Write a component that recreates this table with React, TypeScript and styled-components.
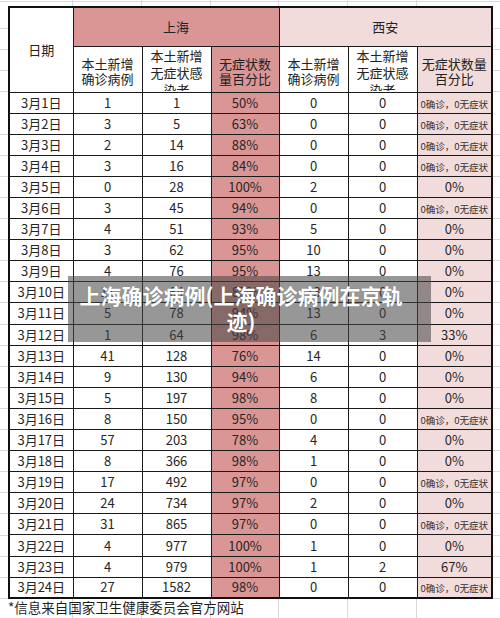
import React from 'react';
import styled, { createGlobalStyle } from 'styled-components';

const GlobalStyle = createGlobalStyle`
    html, body {
        margin: 0;
        padding: 0;
        background: #ffffff;
    }
    body {
        font-family: "Noto Sans CJK SC", "Liberation Sans", sans-serif;
        color: #1c1c1c;
    }
`;

const PINK = '#da9694';
const LIGHT_PINK = '#f2dcdb';
const GRID = '#dadada';

const Sheet = styled.div`
    position: relative;
    width: 500px;
    height: 618px;
    overflow: hidden;
    box-sizing: border-box;
    padding: 6px 0 0 8px;
    background:
        linear-gradient(${GRID}, ${GRID}) 72px 0 / 1px 100% no-repeat,
        linear-gradient(${GRID}, ${GRID}) 141px 0 / 1px 100% no-repeat,
        linear-gradient(${GRID}, ${GRID}) 210px 0 / 1px 100% no-repeat,
        linear-gradient(${GRID}, ${GRID}) 278px 0 / 1px 100% no-repeat,
        linear-gradient(${GRID}, ${GRID}) 347px 0 / 1px 100% no-repeat,
        linear-gradient(${GRID}, ${GRID}) 416px 0 / 1px 100% no-repeat,
        repeating-linear-gradient(
            to bottom,
            transparent 0 20.1px,
            ${GRID} 20.1px 21.1px
        ) 0 8px / 100% 100%,
        #ffffff;
`;

const Table = styled.table`
    border-collapse: collapse;
    table-layout: fixed;
    width: 483px;
    border: 2px solid #111;
    background: #ffffff;
`;

const HeadRow = styled.tr<{ $h: number }>`
    height: ${(p) => p.$h}px;
`;

const HeadCell = styled.th<{ $bg?: string }>`
    padding: 0 2px;
    border: 1px solid #1a1a1a;
    background: ${(p) => p.$bg || '#ffffff'};
    font-weight: 400;
    font-size: 13px;
    line-height: 15px;
    text-align: center;
    vertical-align: middle;
    color: #222;
    overflow: hidden;
`;

const Wrap = styled.div<{ $clip?: boolean }>`
    height: ${(p) => (p.$clip ? '44px' : 'auto')};
    overflow: hidden;
    line-height: ${(p) => (p.$clip ? '17px' : '15px')};
    padding-top: ${(p) => (p.$clip ? '0' : '3px')};
    margin-top: ${(p) => (p.$clip ? '-1px' : '0')};
    box-sizing: border-box;
    word-break: break-all;
`;

const DataRow = styled.tr`
    height: 21.1px;
`;

const Cell = styled.td<{ $bg?: string }>`
    padding: 0;
    border: 1px solid #1a1a1a;
    background: ${(p) => p.$bg || '#ffffff'};
    font-size: 13px;
    line-height: 14px;
    text-align: center;
    vertical-align: middle;
    color: #262626;
    white-space: nowrap;
    overflow: hidden;
`;

const Small = styled.span`
    font-size: 9.6px;
    line-height: 12px;
    letter-spacing: -0.1px;
    color: #333;
`;

const Footer = styled.div`
    margin-top: 0;
    font-size: 13.5px;
    line-height: 17px;
    color: #1e1e1e;
    white-space: nowrap;
`;

const Caption = styled.div`
    position: absolute;
    left: 68px;
    top: 276px;
    width: 363px;
    height: 66px;
    box-sizing: border-box;
    padding: 6px 25px 0 8px;
    background: rgba(70, 70, 70, 0.56);
    color: #ffffff;
    font-family: "Noto Sans CJK SC", sans-serif;
    font-weight: 700;
    font-size: 21px;
    line-height: 26px;
    text-align: center;
    text-shadow: 0 0 1px rgba(0, 0, 0, 0.3);
`;

type Row = [string, string, string, string, string, string, string];

const NONE = 'none';

const rows: Row[] = [
    ['3月1日', '1', '1', '50%', '0', '0', NONE],
    ['3月2日', '3', '5', '63%', '0', '0', NONE],
    ['3月3日', '2', '14', '88%', '0', '0', NONE],
    ['3月4日', '3', '16', '84%', '0', '0', NONE],
    ['3月5日', '0', '28', '100%', '2', '0', '0%'],
    ['3月6日', '3', '45', '94%', '0', '0', NONE],
    ['3月7日', '4', '51', '93%', '5', '0', '0%'],
    ['3月8日', '3', '62', '95%', '10', '0', '0%'],
    ['3月9日', '4', '76', '95%', '13', '0', '0%'],
    ['3月10日', '11', '64', '85%', '13', '0', '0%'],
    ['3月11日', '5', '78', '94%', '13', '0', '0%'],
    ['3月12日', '1', '64', '98%', '6', '3', '33%'],
    ['3月13日', '41', '128', '76%', '14', '0', '0%'],
    ['3月14日', '9', '130', '94%', '6', '0', '0%'],
    ['3月15日', '5', '197', '98%', '8', '0', '0%'],
    ['3月16日', '8', '150', '95%', '0', '0', NONE],
    ['3月17日', '57', '203', '78%', '4', '0', '0%'],
    ['3月18日', '8', '366', '98%', '1', '0', '0%'],
    ['3月19日', '17', '492', '97%', '0', '0', NONE],
    ['3月20日', '24', '734', '97%', '2', '0', '0%'],
    ['3月21日', '31', '865', '97%', '0', '0', NONE],
    ['3月22日', '4', '977', '100%', '1', '0', '0%'],
    ['3月23日', '4', '979', '100%', '1', '2', '67%'],
    ['3月24日', '27', '1582', '98%', '0', '0', NONE],
];

const widths = [64, 69, 69, 68, 69, 69, 75];

export default function App() {
    return (
        <>
            <GlobalStyle />
            <Sheet>
                <Table>
                    <colgroup>
                        {widths.map((w, i) => (
                            <col key={i} style={{ width: w }} />
                        ))}
                    </colgroup>
                    <thead>
                        <HeadRow $h={39}>
                            <HeadCell rowSpan={2}>日期</HeadCell>
                            <HeadCell colSpan={3} $bg={PINK}>上海</HeadCell>
                            <HeadCell colSpan={3} $bg={LIGHT_PINK}>西安</HeadCell>
                        </HeadRow>
                        <HeadRow $h={46}>
                            <HeadCell><Wrap>本土新增确诊病例</Wrap></HeadCell>
                            <HeadCell><Wrap $clip>本土新增无症状感染者</Wrap></HeadCell>
                            <HeadCell $bg={PINK}><Wrap>无症状数量百分比</Wrap></HeadCell>
                            <HeadCell><Wrap>本土新增确诊病例</Wrap></HeadCell>
                            <HeadCell><Wrap $clip>本土新增无症状感染者</Wrap></HeadCell>
                            <HeadCell $bg={LIGHT_PINK}><Wrap>无症状数量百分比</Wrap></HeadCell>
                        </HeadRow>
                    </thead>
                    <tbody>
                        {rows.map((r) => (
                            <DataRow key={r[0]}>
                                <Cell>{r[0]}</Cell>
                                <Cell>{r[1]}</Cell>
                                <Cell>{r[2]}</Cell>
                                <Cell $bg={PINK}>{r[3]}</Cell>
                                <Cell>{r[4]}</Cell>
                                <Cell>{r[5]}</Cell>
                                <Cell $bg={LIGHT_PINK}>
                                    {r[6] === NONE ? <Small>0确诊，0无症状</Small> : r[6]}
                                </Cell>
                            </DataRow>
                        ))}
                    </tbody>
                </Table>
                <Footer>*信息来自国家卫生健康委员会官方网站</Footer>
                <Caption>上海确诊病例(上海确诊病例在京轨迹)</Caption>
            </Sheet>
        </>
    );
}
